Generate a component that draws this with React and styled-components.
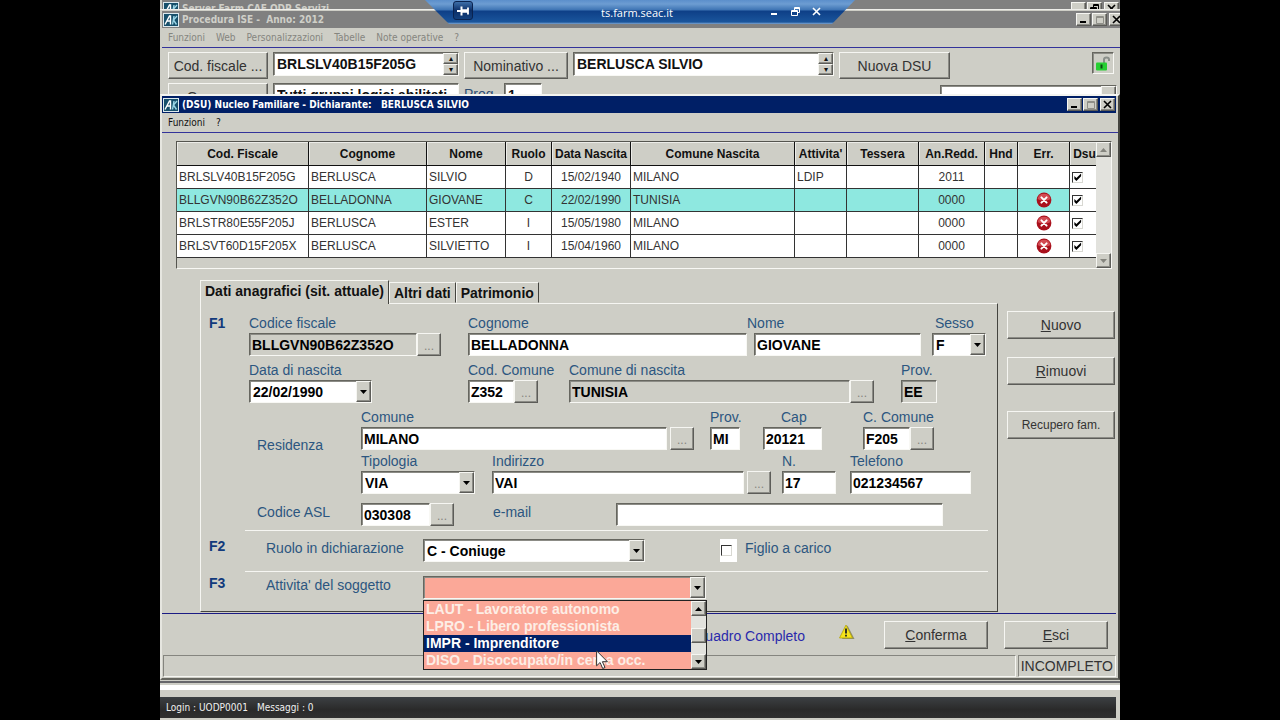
import React from "react";
import styled, { createGlobalStyle, css } from "styled-components";

const columns = [
  { key: "cf", title: "Cod. Fiscale", width: 132 },
  { key: "cognome", title: "Cognome", width: 118 },
  { key: "nome", title: "Nome", width: 79 },
  { key: "ruolo", title: "Ruolo", width: 46, center: true },
  { key: "nascita", title: "Data Nascita", width: 79, center: true },
  { key: "comune", title: "Comune Nascita" },
  { key: "attivita", title: "Attivita'", width: 52 },
  { key: "tessera", title: "Tessera", width: 72 },
  { key: "redd", title: "An.Redd.", width: 66, center: true },
  { key: "hnd", title: "Hnd", width: 33 },
  { key: "err", title: "Err.", width: 52 },
  { key: "dsu", title: "Dsu", width: 26 },
];

const members = [
  { cf: "BRLSLV40B15F205G", cognome: "BERLUSCA", nome: "SILVIO", ruolo: "D", nascita: "15/02/1940", comune: "MILANO", attivita: "LDIP", redd: "2011" },
  { cf: "BLLGVN90B62Z352O", cognome: "BELLADONNA", nome: "GIOVANE", ruolo: "C", nascita: "22/02/1990", comune: "TUNISIA", redd: "0000", err: true, selected: true },
  { cf: "BRLSTR80E55F205J", cognome: "BERLUSCA", nome: "ESTER", ruolo: "I", nascita: "15/05/1980", comune: "MILANO", redd: "0000", err: true },
  { cf: "BRLSVT60D15F205X", cognome: "BERLUSCA", nome: "SILVIETTO", ruolo: "I", nascita: "15/04/1960", comune: "MILANO", redd: "0000", err: true },
];

const activities = [
  "LAUT - Lavoratore autonomo",
  "LPRO - Libero professionista",
  "IMPR - Imprenditore",
  "DISO - Disoccupato/in cerca occ.",
];

/* ---------- icons ---------- */

const AppIcon = () => (
  <svg width="16" height="14" viewBox="0 0 16 14" aria-hidden="true">
    <rect width="16" height="14" fill="#dce9ee" />
    <rect x="1" y="1" width="14" height="12" fill="#17506b" />
    <path d="M2 11.500 6.500 3h1v8.500M4 8h3" stroke="#fff" strokeWidth="1.4" fill="none" />
    <path d="M9.500 11.500 11 3M14 3l-3.500 4 3 4.500" stroke="#9bd6e6" strokeWidth="1.400" fill="none" />
  </svg>
);

const Triangle = ({ up, color = "#000" }) => (
  <svg width="7" height="4" viewBox="0 0 7 4" aria-hidden="true">
    <path d={up ? "M0 4h7L3.5 0z" : "M0 0h7L3.5 4z"} fill={color} />
  </svg>
);

const ErrorIcon = () => (
  <svg width="16" height="16" viewBox="0 0 16 16" role="img" aria-label="Errore">
    <circle cx="8" cy="8" r="7.4" fill="#a9101c" />
    <path d="M1.6 7a6.5 6.5 0 0 1 12.8 0c-3 2-9 2-12.8 0z" fill="#d24a52" />
    <path d="M5.4 5.4l5.2 5.2M10.6 5.4l-5.2 5.2" stroke="#fff" strokeWidth="2" strokeLinecap="round" />
  </svg>
);

const WarningIcon = () => (
  <svg width="16" height="16" viewBox="0 0 16 16" role="img" aria-label="Attenzione">
    <path d="M8.500 1.500 15.500 15H3z" fill="#8d8d6a" />
    <path d="M7 1 13.500 14H.5z" fill="#f6e41b" stroke="#b3a40c" strokeWidth=".8" />
    <path d="M7 4.500v5M7 10.800v1.700" stroke="#222" strokeWidth="1.8" />
  </svg>
);

const LockIcon = () => (
  <svg width="16" height="16" viewBox="0 0 16 16" role="img" aria-label="Sbloccato">
    <path d="M9 8V4.5C9 3 10 2.500 11.500 2.500S14 3 14 4.500V6" stroke="#8a8f8a" strokeWidth="2" fill="none" />
    <rect x="1" y="7.500" width="11" height="8" rx="1" fill="#27cf33" />
    <path d="M6.500 9.500v4" stroke="#0c4a12" strokeWidth="2" />
  </svg>
);

const PinIcon = () => (
  <svg width="14" height="12" viewBox="0 0 14 12" aria-hidden="true">
    <path d="M1 6h4M12 2.500v7" stroke="#fff" strokeWidth="1.800" />
    <path d="M5.500 1.500v9" stroke="#fff" strokeWidth="2" />
    <path d="M6 6h6" stroke="#fff" strokeWidth="3.400" />
  </svg>
);

const MinimizeGlyph = ({ color = "#000" }) => (
  <svg width="9" height="9" viewBox="0 0 9 9" aria-hidden="true">
    <path d="M1 7h6" stroke={color} strokeWidth="2" />
  </svg>
);

const MaximizeGlyph = () => (
  <svg width="10" height="10" viewBox="0 0 10 10" aria-hidden="true">
    <path d="M1.500 1.500h7v7h-7zM1 2.500h8" stroke="#8f8f88" fill="none" />
  </svg>
);

const RestoreGlyph = ({ color = "#000" }) => (
  <svg width="9" height="9" viewBox="0 0 9 9" aria-hidden="true">
    <path d="M3.500 3.500v-3h5v5h-2M.5 3.500h6v5h-6zM.5 4.500h6M3.500 1.500h5" stroke={color} fill="none" />
  </svg>
);

const CloseGlyph = ({ color = "#000" }) => (
  <svg width="9" height="9" viewBox="0 0 9 9" aria-hidden="true">
    <path d="M1 1l7 7M8 1L1 8" stroke={color} strokeWidth="1.600" />
  </svg>
);

/* ---------- small building blocks ---------- */

const WindowButtons = ({ restore }) => (
  <TitleButtons>
    <TitleButton type="button" aria-label="Riduci a icona"><MinimizeGlyph /></TitleButton>
    <TitleButton type="button" aria-label="Ingrandisci">{restore ? <RestoreGlyph /> : <MaximizeGlyph />}</TitleButton>
    <TitleButton type="button" aria-label="Chiudi" $last><CloseGlyph /></TitleButton>
  </TitleButtons>
);

const Field = ({ id, label, value, width, grow, lead, indent, labelPad, readOnly, browse, browseGap }) => (
  <FieldBox $width={width} $grow={grow} $lead={lead}>
    <FieldLabel htmlFor={id} $pad={labelPad}>{label}</FieldLabel>
    <FieldControl $indent={indent}>
      <TextInput id={id} defaultValue={value} readOnly={readOnly} />
      {browse && <BrowseButton type="button" aria-label={`Cerca ${label}`} $gap={browseGap}>...</BrowseButton>}
    </FieldControl>
  </FieldBox>
);

const Combo = ({ id, value, width, tone, children }) => (
  <ComboBox $width={width} $tone={tone}>
    <select id={id} defaultValue={value}>
      <option>{value}</option>
    </select>
    <ComboArrow><Triangle /></ComboArrow>
    {children}
  </ComboBox>
);

const ComboField = ({ id, label, value, width, lead, labelPad }) => (
  <FieldBox $width={width} $lead={lead}>
    <FieldLabel htmlFor={id} $pad={labelPad}>{label}</FieldLabel>
    <Combo id={id} value={value} />
  </FieldBox>
);

const SpinInput = ({ label, value, width }) => (
  <SpinBox $width={width}>
    <input aria-label={label} defaultValue={value} />
    <SpinButtons>
      <SpinButton type="button" aria-label="Precedente">▴</SpinButton>
      <SpinButton type="button" aria-label="Successivo">▾</SpinButton>
    </SpinButtons>
  </SpinBox>
);

/* ---------- sections ---------- */

const RemoteBar = () => (
  <RemoteBarShape>
    <PinButton type="button" aria-label="Blocca barra"><PinIcon /></PinButton>
    <span>ts.farm.seac.it</span>
    <RemoteActions>
      <button type="button" aria-label="Riduci"><MinimizeGlyph color="#fff" /></button>
      <button type="button" aria-label="Ripristina"><RestoreGlyph color="#fff" /></button>
      <button type="button" aria-label="Chiudi connessione"><CloseGlyph color="#fff" /></button>
    </RemoteActions>
  </RemoteBarShape>
);

const IseWindow = () => (
  <IseFrame>
    <TitleBar $inactive>
      <AppIcon />
      <h2>Procedura ISE -&nbsp; Anno: 2012</h2>
      <WindowButtons />
    </TitleBar>
    <MenuBar $disabled>
      <button type="button">Funzioni</button>
      <button type="button">Web</button>
      <button type="button">Personalizzazioni</button>
      <button type="button">Tabelle</button>
      <button type="button">Note operative</button>
      <button type="button">?</button>
    </MenuBar>
    <SearchRow>
      <PushButton type="button" $width={100}>Cod. fiscale ...</PushButton>
      <SpinInput label="Codice fiscale" value="BRLSLV40B15F205G" width={186} />
      <PushButton type="button" $width={104}>Nominativo ...</PushButton>
      <SpinInput label="Nominativo" value="BERLUSCA SILVIO" width={261} />
      <PushButton type="button" $width={111}>Nuova DSU</PushButton>
      <LockBox><LockIcon /></LockBox>
    </SearchRow>
    <SearchRow>
      <PushButton type="button" $width={100}>Gruppo ...</PushButton>
      <SpinBox $width={186}>
        <input aria-label="Gruppo" defaultValue="Tutti gruppi logici abilitati" />
      </SpinBox>
      <ProgLabel htmlFor="prog">Prog.</ProgLabel>
      <SpinBox $width={38}>
        <input id="prog" defaultValue="1" />
      </SpinBox>
      <FilterSlot>
        <ComboBox>
          <select aria-label="Filtro" />
          <ComboArrow><Triangle /></ComboArrow>
        </ComboBox>
      </FilterSlot>
    </SearchRow>
  </IseFrame>
);

const MembersTable = () => (
  <TableBox>
    <Table>
      <colgroup>
        {columns.map((c) => (
          <col key={c.key} width={c.width} />
        ))}
      </colgroup>
      <thead>
        <tr>
          {columns.map((c) => (
            <th key={c.key} scope="col">{c.title}</th>
          ))}
        </tr>
      </thead>
      <tbody>
        {members.map((m) => (
          <Row key={m.cf} $selected={m.selected}>
            {columns.map((c) => (
              <Cell key={c.key} $center={c.center} $plain={c.key === "dsu"}>
                {c.key === "dsu" && <TableCheck aria-label={`Dsu ${m.nome}`} defaultChecked />}
                {c.key === "err" && m.err && <ErrorIcon />}
                {c.key !== "dsu" && c.key !== "err" && m[c.key]}
              </Cell>
            ))}
          </Row>
        ))}
      </tbody>
    </Table>
    <ScrollTrack>
      <ScrollButton type="button" aria-label="Scorri su"><Triangle up color="#85857e" /></ScrollButton>
      <ScrollButton type="button" aria-label="Scorri giu"><Triangle color="#85857e" /></ScrollButton>
    </ScrollTrack>
  </TableBox>
);

const ActivityList = () => (
  <ListPopup>
    <ul role="listbox" aria-label="Attivita' del soggetto">
      {activities.map((a) => (
        <ListOption key={a} role="option" aria-selected={a.startsWith("IMPR")}>{a}</ListOption>
      ))}
    </ul>
    <ScrollTrack>
      <ScrollButton type="button" aria-label="Su"><Triangle up /></ScrollButton>
      <ScrollThumb />
      <ScrollButton type="button" aria-label="Giu"><Triangle /></ScrollButton>
    </ScrollTrack>
    <Pointer width="13" height="20" viewBox="0 0 13 20" aria-hidden="true">
      <path d="M.6.8v15l3.500-3.300 2.600 6 2.300-1-2.600-5.800h5z" fill="#fff" stroke="#333" />
    </Pointer>
  </ListPopup>
);

const PersonForm = () => (
  <Panel>
    <Section>
      <SectionCode>F1</SectionCode>
      <Rows>
        <FormRow>
          <Field id="cf" label="Codice fiscale" value="BLLGVN90B62Z352O" width={192} readOnly browse />
          <Field id="cognome" label="Cognome" value="BELLADONNA" grow lead={27} />
          <Field id="nome" label="Nome" value="GIOVANE" width={174} indent={7} />
          <ComboField id="sesso" label="Sesso" value="F" width={54} lead={11} labelPad={3} />
        </FormRow>
        <FormRow $top={6} $end={49}>
          <ComboField id="nascita" label="Data di nascita" value="22/02/1990" width={123} />
          <Field id="codcomune" label="Cod. Comune" value="Z352" width={70} lead={96} browse />
          <Field id="comunenascita" label="Comune di nascita" value="TUNISIA" grow lead={31} readOnly browse />
          <Field id="provnascita" label="Prov." value="EE" width={36} lead={27} readOnly />
        </FormRow>
        <Residence>
          <GroupLabel>Residenza</GroupLabel>
          <ResidenceRows>
            <FormRow $top={6} $end={52}>
              <Field id="comune" label="Comune" value="MILANO" grow browse browseGap={3} />
              <Field id="prov" label="Prov." value="MI" width={30} lead={16} />
              <Field id="cap" label="Cap" value="20121" width={59} lead={23} labelPad={18} />
              <Field id="ccomune" label="C. Comune" value="F205" width={71} lead={41} browse />
            </FormRow>
            <FormRow $top={3} $end={15}>
              <ComboField id="tipologia" label="Tipologia" value="VIA" width={114} />
              <Field id="indirizzo" label="Indirizzo" value="VAI" grow lead={17} browse browseGap={3} />
              <Field id="numero" label="N." value="17" width={54} lead={11} />
              <Field id="telefono" label="Telefono" value="021234567" width={121} lead={14} />
            </FormRow>
          </ResidenceRows>
        </Residence>
        <FormRow $top={9} $end={43}>
          <SideLabel htmlFor="asl" $width={112} $pad={8}>Codice ASL</SideLabel>
          <FieldBox $width={93}>
            <FieldControl>
              <TextInput id="asl" defaultValue="030308" />
              <BrowseButton type="button" aria-label="Cerca ASL">...</BrowseButton>
            </FieldControl>
          </FieldBox>
          <SideLabel htmlFor="email" $width={162} $pad={39}>e-mail</SideLabel>
          <FieldBox $grow>
            <FieldControl>
              <TextInput id="email" type="email" />
            </FieldControl>
          </FieldBox>
        </FormRow>
      </Rows>
    </Section>
    <Section>
      <SectionCode $top={8}>F2</SectionCode>
      <Rows $line>
        <FormRow $top={8}>
          <SideLabel htmlFor="ruolo" $width={174} $pad={17}>Ruolo in dichiarazione</SideLabel>
          <Combo id="ruolo" value="C - Coniuge" width={222} />
          <CheckLabel>
            <CheckWell><TableCheck /></CheckWell>
            Figlio a carico
          </CheckLabel>
        </FormRow>
      </Rows>
    </Section>
    <Section>
      <SectionCode $top={4}>F3</SectionCode>
      <Rows $line>
        <FormRow $top={4}>
          <SideLabel htmlFor="attivita" $width={174} $pad={17}>Attivita' del soggetto</SideLabel>
          <Combo id="attivita" value="" width={283} tone="#fba898">
            <ActivityList />
          </Combo>
        </FormRow>
      </Rows>
    </Section>
  </Panel>
);

const DsuWindow = () => (
  <DsuFrame>
    <TitleBar>
      <AppIcon />
      <h1>(DSU) Nucleo Familiare - Dichiarante:&nbsp;&nbsp; BERLUSCA SILVIO</h1>
      <WindowButtons />
    </TitleBar>
    <MenuBar>
      <button type="button">Funzioni</button>
      <button type="button">?</button>
    </MenuBar>
    <MembersTable />
    <Workspace>
      <FormColumn>
        <Tabs role="tablist">
          <Tab type="button" role="tab" aria-selected="true">Dati anagrafici (sit. attuale)</Tab>
          <Tab type="button" role="tab" aria-selected="false">Altri dati</Tab>
          <Tab type="button" role="tab" aria-selected="false">Patrimonio</Tab>
        </Tabs>
        <PersonForm />
      </FormColumn>
      <SideButtons>
        <PushButton type="button" $tall><u>N</u>uovo</PushButton>
        <PushButton type="button" $tall><u>R</u>imuovi</PushButton>
        <PushButton type="button" $tall $small>Recupero fam.</PushButton>
      </SideButtons>
    </Workspace>
    <Footer>
      <QuadroText>Quadro Completo</QuadroText>
      <WarningIcon />
      <PushButton type="button" $tall $width={104}><u>C</u>onferma</PushButton>
      <PushButton type="button" $tall $width={104}><u>E</u>sci</PushButton>
    </Footer>
    <StatusStrip>
      <StatusCell $grow />
      <StatusCell>INCOMPLETO</StatusCell>
    </StatusStrip>
  </DsuFrame>
);

export default function App() {
  return (
    <>
      <GlobalStyle />
      <Page>
        <Desktop>
          <ServerFrame>
            <TitleBar $inactive>
              <AppIcon />
              <h2>Server Farm CAF ODP Servizi</h2>
              <WindowButtons restore />
            </TitleBar>
          </ServerFrame>
          <IseWindow />
          <DsuWindow />
          <IseBottomEdge />
          <LoginBar>
            <span>Login : UODP0001</span>
            <span>Messaggi : 0</span>
          </LoginBar>
          <RemoteBar />
        </Desktop>
      </Page>
    </>
  );
}

/* ---------- styles ---------- */

const GlobalStyle = createGlobalStyle`
  * {
    box-sizing: border-box;
  }
  body {
    margin: 0;
    background: #000;
    font-family: "Liberation Sans", Arial, sans-serif;
    font-size: 14px;
    color: #111;
  }
  button, input, select {
    font: inherit;
    color: inherit;
    margin: 0;
    padding: 0;
    border: 0;
    border-radius: 0;
    background: none;
    min-width: 0;
  }
  h1, h2, ul {
    margin: 0;
    padding: 0;
  }
  svg {
    display: block;
    flex: none;
  }
`;

const raised = css`
  background: #cecec6;
  border: 1px solid;
  border-color: #f6f6f2 #5c5c58 #5c5c58 #f6f6f2;
  box-shadow: inset -1px -1px #8c8c86;
`;

const sunken = css`
  border: 1px solid;
  border-color: #66665f #f8f8f4 #f8f8f4 #66665f;
  box-shadow: inset 1px 1px #8c8c86;
`;

const Page = styled.div`
  min-height: 100vh;
  display: flex;
  justify-content: center;
`;

const Desktop = styled.main`
  position: relative;
  width: 75%;
  min-width: 940px;
  min-height: 100vh;
  display: flex;
  flex-direction: column;
  background: #cecec6;
  overflow: hidden;
`;

const ServerFrame = styled.section`
  height: 10px;
  padding-left: 2px;
  overflow: hidden;
  border-bottom: 1px solid #eeeeea;
`;

const IseFrame = styled.section`
  height: 84px;
  overflow: hidden;
  padding: 1px 0 0 2px;
  margin-right: -5px;
`;

const DsuFrame = styled.section`
  position: relative;
  border: 2px solid;
  border-color: #f4f4f0 #44443f #66665f #e6e6e0;
  background: #cecec6;
`;

const TitleBar = styled.header`
  display: flex;
  align-items: center;
  height: 17px;
  padding: 0 1px;
  gap: 3px;
  margin-right: ${({ $inactive }) => ($inactive ? 0 : "2px")};
  color: ${({ $inactive }) => ($inactive ? "#cfcfc8" : "#fff")};
  background: ${({ $inactive }) => ($inactive ? "#808080" : "#001f66")};
  h1, h2 {
    flex: 1;
    font-family: "DejaVu Sans Condensed", "DejaVu Sans", sans-serif;
    font-size: 10px;
    font-weight: 700;
    line-height: 16px;
    white-space: nowrap;
  }
`;

const TitleButtons = styled.div`
  display: flex;
  gap: 1px;
`;

const TitleButton = styled.button`
  ${raised}
  width: 15px;
  height: 13px;
  display: flex;
  align-items: center;
  justify-content: center;
  margin-left: ${({ $last }) => ($last ? "1px" : 0)};
`;

const MenuBar = styled.nav`
  display: flex;
  align-items: center;
  gap: 11px;
  height: 20px;
  padding: 0 6px;
  border-bottom: 1px solid #33339a;
  color: ${({ $disabled }) => ($disabled ? "#85857f" : "#111")};
  font-family: "DejaVu Sans Condensed", "DejaVu Sans", sans-serif;
  font-size: 10px;
  line-height: 14px;
`;

const SearchRow = styled.div`
  display: flex;
  align-items: flex-start;
  gap: 5px;
  padding: 4px 11px 0 6px;
`;

const PushButton = styled.button`
  ${raised}
  width: ${({ $width }) => ($width ? `${$width}px` : "auto")};
  height: ${({ $tall }) => ($tall ? "28px" : "27px")};
  font-size: ${({ $small }) => ($small ? "12px" : "14px")};
  line-height: 16px;
  color: #333;
  white-space: nowrap;
`;

const SpinBox = styled.div`
  ${sunken}
  display: flex;
  width: ${({ $width }) => $width}px;
  height: 24px;
  background: #fff;
  input {
    flex: 1;
    padding: 0 3px;
    font-weight: 700;
  }
`;

const SpinButtons = styled.div`
  display: flex;
  flex-direction: column;
  width: 15px;
`;

const SpinButton = styled.button`
  ${raised}
  flex: 1;
  font-size: 8px;
  line-height: 6px;
`;

const LockBox = styled.div`
  ${sunken}
  margin-left: auto;
  padding: 2px;
`;

const ProgLabel = styled.label`
  width: 35px;
  line-height: 22px;
  color: #2f4f75;
`;

const FilterSlot = styled.div`
  width: 177px;
  margin: 2px -3px 0 auto;
`;

const TableBox = styled.div`
  display: flex;
  align-items: flex-start;
  margin: 8px 6px 0 14px;
  height: 128px;
  border: 1px solid;
  border-color: #55554f #f8f8f4 #f8f8f4 #55554f;
`;

const Table = styled.table`
  flex: 1;
  width: 100%;
  table-layout: fixed;
  border-spacing: 0;
  font-size: 12px;
  line-height: 16px;
  th {
    height: 24px;
    padding: 0;
    font-weight: 700;
    white-space: nowrap;
    border-right: 1px solid #111;
    border-bottom: 1px solid #111;
    box-shadow: inset 1px 1px #ecece8;
  }
  th:last-child {
    border-right: 0;
    padding-left: 3px;
  }
`;

const Row = styled.tr`
  background: ${({ $selected }) => ($selected ? "#8ee8e0" : "#fff")};
`;

const Cell = styled.td`
  height: 23px;
  padding: 0 2px;
  color: #333;
  text-align: ${({ $center }) => ($center ? "center" : "left")};
  white-space: nowrap;
  border-right: ${({ $plain }) => ($plain ? "0" : "1px solid #333")};
  border-bottom: 1px solid #333;
  ${({ $plain }) => $plain && "background: #fff;"}
  svg {
    margin: 0 auto;
  }
`;

const TableCheck = styled.input.attrs({ type: "checkbox" })`
  appearance: none;
  display: block;
  width: 11px;
  height: 11px;
  background: #fff;
  border: 1px solid;
  border-color: #333 #d8d8d2 #d8d8d2 #333;
  &:checked::after {
    content: "";
    display: block;
    width: 9px;
    height: 9px;
    background: #000;
    clip-path: polygon(15% 40%, 38% 62%, 90% 10%, 90% 42%, 38% 94%, 15% 72%);
  }
`;

const ScrollTrack = styled.div`
  display: flex;
  flex-direction: column;
  justify-content: space-between;
  flex: none;
  width: 15px;
  height: 100%;
  background: #e2e2dd;
`;

const ScrollButton = styled.button`
  ${raised}
  display: flex;
  align-items: center;
  justify-content: center;
  width: 15px;
  height: 15px;
`;

const ScrollThumb = styled.span`
  ${raised}
  height: 15px;
`;

const Workspace = styled.div`
  display: flex;
  gap: 9px;
  padding: 11px 3px 0 38px;
`;

const FormColumn = styled.div`
  flex: 1;
`;

const Tabs = styled.div`
  display: flex;
  align-items: flex-end;
  height: 23px;
`;

const Tab = styled.button`
  height: 21px;
  padding: 0 4px;
  border: 1px solid;
  border-color: #f6f6f2 #44443f transparent #f6f6f2;
  font-weight: 700;
  line-height: 16px;
  white-space: nowrap;
  &[aria-selected="true"] {
    position: relative;
    height: 24px;
    margin-bottom: -1px;
    padding-bottom: 3px;
    background: #cecec6;
    border-bottom: 0;
  }
`;

const Panel = styled.form`
  padding: 11px 9px 3px 8px;
  border: 1px solid;
  border-color: #f6f6f2 #44443f #44443f #f6f6f2;
`;

const SideButtons = styled.div`
  display: flex;
  flex-direction: column;
  gap: 18px;
  width: 108px;
  padding-top: 31px;
  button:last-child {
    margin-top: 8px;
  }
`;

const Section = styled.section`
  display: flex;
`;

const SectionCode = styled.b`
  flex: none;
  width: 36px;
  padding-top: ${({ $top }) => $top || 0}px;
  line-height: 16px;
  color: #123a7c;
`;

const Rows = styled.div`
  flex: 1;
  min-width: 0;
  padding: 0 2px 4px 4px;
  border-top: ${({ $line }) => ($line ? "1px solid #f6f6f2" : "0")};
  ${({ $line }) => $line && "padding-bottom: 9px;"}
`;

const FormRow = styled.div`
  display: flex;
  margin-top: ${({ $top }) => $top || 0}px;
  padding-right: ${({ $end }) => $end || 0}px;
`;

const FieldBox = styled.div`
  flex: ${({ $grow, $width }) => ($grow ? "1" : `0 0 ${$width}px`)};
  min-width: 0;
  margin-left: ${({ $lead }) => $lead || 0}px;
`;

const FieldLabel = styled.label`
  display: block;
  height: 18px;
  padding-left: ${({ $pad }) => $pad || 0}px;
  line-height: 16px;
  white-space: nowrap;
  color: #2c5680;
`;

const FieldControl = styled.div`
  display: flex;
  padding-left: ${({ $indent }) => $indent || 0}px;
`;

const TextInput = styled.input`
  ${sunken}
  flex: 1;
  width: 100%;
  height: 23px;
  padding: 0 2px;
  font-weight: 700;
  background: #fff;
  color: #000;
  &:read-only {
    background: #cecec6;
  }
`;

const BrowseButton = styled.button`
  ${raised}
  flex: none;
  width: 24px;
  height: 23px;
  margin-left: ${({ $gap }) => $gap || 0}px;
  padding-top: 3px;
  font-size: 12px;
  color: #85857f;
`;

const ComboBox = styled.div`
  ${sunken}
  position: relative;
  display: flex;
  width: ${({ $width }) => ($width ? `${$width}px` : "auto")};
  height: 23px;
  background: ${({ $tone }) => $tone || "#fff"};
  select {
    flex: 1;
    appearance: none;
    padding: 0 3px;
    font-weight: 700;
    color: #000;
  }
`;

const ComboArrow = styled.span`
  ${raised}
  display: flex;
  align-items: center;
  justify-content: center;
  width: 15px;
  pointer-events: none;
`;

const Residence = styled.div`
  display: flex;
  align-items: center;
`;

const GroupLabel = styled.span`
  flex: none;
  width: 112px;
  padding: 0 0 8px 8px;
  color: #2c5680;
`;

const ResidenceRows = styled.div`
  flex: 1;
  min-width: 0;
`;

const SideLabel = styled.label`
  flex: none;
  width: ${({ $width }) => $width}px;
  padding-left: ${({ $pad }) => $pad}px;
  line-height: 18px;
  white-space: nowrap;
  color: #2c5680;
`;

const CheckLabel = styled.label`
  display: flex;
  gap: 8px;
  margin-left: 75px;
  line-height: 18px;
  color: #2c5680;
`;

const CheckWell = styled.span`
  padding: 6px 5px 5px 1px;
  background: #fff;
`;

const ListPopup = styled.div`
  position: absolute;
  z-index: 2;
  top: 23px;
  left: -1px;
  right: -2px;
  display: flex;
  height: 70px;
  background: #fba898;
  border: 1px solid #222;
  ul {
    flex: 1;
    list-style: none;
  }
`;

const ListOption = styled.li`
  padding-left: 2px;
  font-weight: 700;
  line-height: 17px;
  white-space: nowrap;
  color: #fdeee6;
  &[aria-selected="true"] {
    color: #fff;
    background: #001f66;
  }
`;

const Pointer = styled.svg`
  position: absolute;
  left: 172px;
  top: 49px;
`;

const Footer = styled.footer`
  display: flex;
  align-items: center;
  justify-content: flex-end;
  height: 42px;
  margin: 1px 2px 0 0;
  padding-right: 8px;
  border-top: 1px solid #1b1b84;
  svg {
    margin: 0 29px 6px 34px;
  }
  button + button {
    margin-left: 16px;
  }
`;

const QuadroText = styled.span`
  padding-top: 3px;
  color: #2a2aac;
`;

const StatusStrip = styled.div`
  display: flex;
  gap: 2px;
  height: 23px;
  padding: 0 2px 1px 1px;
`;

const StatusCell = styled.div`
  flex: ${({ $grow }) => ($grow ? "1" : "none")};
  padding: 0 2px;
  border: 1px solid;
  border-color: #85857f #f6f6f2 #f6f6f2 #85857f;
  line-height: 20px;
  color: #333;
`;

const IseBottomEdge = styled.div`
  height: 9px;
  margin-top: 1px;
  border-top: 2px solid #66666a;
  border-bottom: 5px solid #fff;
`;

const LoginBar = styled.footer`
  display: flex;
  align-items: center;
  gap: 9px;
  height: 21px;
  margin: auto 4px 2px 0;
  padding: 0 6px;
  font-family: "DejaVu Sans Condensed", "DejaVu Sans", sans-serif;
  font-size: 10px;
  color: #f0f0f0;
  background: linear-gradient(#3c4043, #2a2a2a 60%, #303030);
`;

const RemoteBarShape = styled.div`
  position: absolute;
  top: 0;
  left: 50%;
  width: 430px;
  margin-left: -215px;
  height: 24px;
  display: grid;
  grid-template-columns: 1fr auto 1fr;
  align-items: center;
  padding: 0 34px 0 28px;
  color: #fff;
  font-family: "Open Sans", "Noto Sans", sans-serif;
  font-size: 11px;
  background: linear-gradient(#5b8fcb 0, #6d9dd2 4px, #3d73b3 10px, #0e3f87 11px, #1a559c 22px, #7fa6d3 24px);
  clip-path: polygon(0 0, 100% 0, calc(100% - 23px) 100%, 24px 100%);
`;

const PinButton = styled.button`
  display: flex;
  align-items: center;
  justify-content: center;
  width: 20px;
  height: 19px;
  margin-bottom: 3px;
  border: 1px solid #0a2350;
  border-radius: 3px;
  background: linear-gradient(#3d6ea8, #0c2f68 50%, #12407e);
`;

const RemoteActions = styled.div`
  display: flex;
  justify-content: flex-end;
  gap: 12px;
  padding-bottom: 2px;
`;
